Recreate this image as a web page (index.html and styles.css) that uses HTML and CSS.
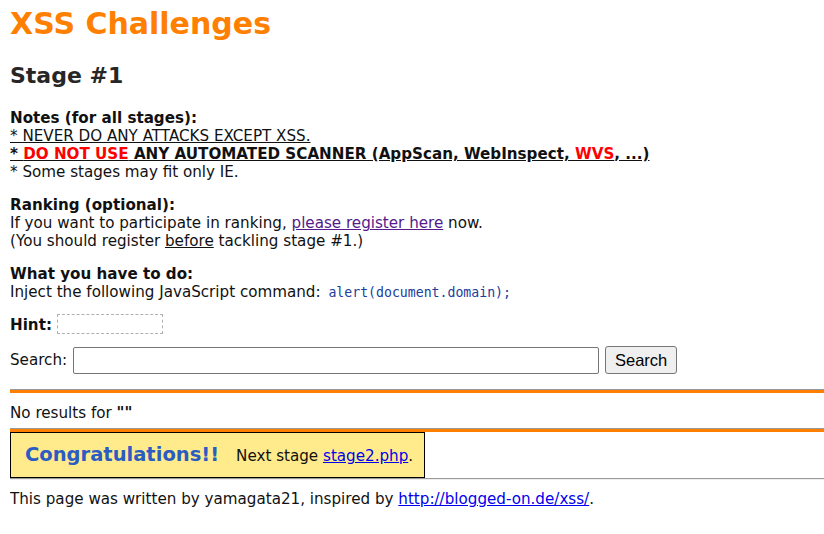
FILE: index.html
```html
<!DOCTYPE html>
<html>
<head>
<meta charset="utf-8">
<title>XSS Challenges (by yamagata21) - Stage #1</title>
<link rel="stylesheet" href="styles.css">
</head>
<body>
<h1 class="title">XSS Challenges</h1>
<h2 class="stage">Stage #1</h2>

<div class="section notes">
<b>Notes (for all stages):</b><br>
<u>* NEVER DO ANY ATTACKS EXCEPT XSS.</u><br>
<b><u>* <span class="red">DO NOT USE</span> ANY AUTOMATED SCANNER (AppScan, WebInspect, <span class="red">WVS</span>, ...)</u></b><br>
* Some stages may fit only IE.
</div>

<div class="section">
<b>Ranking (optional):</b><br>
If you want to participate in ranking, <a class="visited" href="#">please register here</a> now.<br>
(You should register <u>before</u> tackling stage #1.)
</div>

<div class="section">
<b>What you have to do:</b><br>
Inject the following JavaScript command: <code class="cmd">alert(document.domain);</code>
</div>

<div class="section hint-row">
<b>Hint:</b> <span class="hint"></span>
</div>

<form class="search-row" onsubmit="return false;">
<label class="search-label">Search:</label>
<input class="search-input" type="text">
<button class="search-btn" type="submit">Search</button>
</form>

<hr class="orange">
<p class="result">No results for <b>""</b></p>
<hr class="orange">

<div class="congrats"><span class="congrats-title">Congratulations!!</span><span class="next">Next stage <a class="link" href="#">stage2.php</a>.</span></div>

<hr class="plain">
<p class="footer">This page was written by yamagata21, inspired by <a class="link" href="#">http://blogged-on.de/xss/</a>.</p>
</body>
</html>
```

FILE: styles.css
```css
html, body {
  background: #ffffff;
}
body {
  margin: 0 0 0 10px;
  padding: 0;
  font-family: "DejaVu Sans", Verdana, sans-serif;
  font-size: 15.15px;
  line-height: 18px;
  color: #111;
}
.title {
  margin: 6px 0 0;
  font-size: 30px;
  line-height: 36px;
  font-weight: bold;
  color: #ff8000;
}
.stage {
  margin: 21px 0 0;
  font-size: 22px;
  line-height: 26px;
  font-weight: bold;
  color: #262626;
}
.section {
  margin-top: 15px;
}
.notes {
  margin-top: 20px;
}
.red {
  color: #ff0000;
}
a.visited {
  color: #551a8b;
}
a.link {
  color: #0000ee;
}
.cmd {
  margin-left: 3px;
  font-family: "DejaVu Sans Mono", monospace;
  font-size: 13.2px;
  color: #20409a;
}
.hint-row {
  margin-top: 12px;
}
.hint {
  display: inline-block;
  width: 104px;
  height: 18px;
  border: 1px dashed #b0b0b0;
  vertical-align: -4px;
}
.search-row {
  display: flex;
  align-items: center;
  margin: 12px 0 0;
  height: 28px;
}
.search-label {
  margin-right: 6px;
}
.search-input {
  box-sizing: border-box;
  width: 526px;
  height: 27px;
  margin: 0;
  border: 1px solid #767676;
  border-radius: 2px;
  padding: 1px 3px;
  font-family: "DejaVu Sans", sans-serif;
  font-size: 15px;
}
.search-btn {
  box-sizing: border-box;
  margin: 0 0 0 6px;
  width: 72px;
  height: 28px;
  padding: 0;
  border: 1px solid #767676;
  border-radius: 3px;
  background: #efefef;
  font-family: "Liberation Sans", Arial, sans-serif;
  font-size: 16.5px;
  color: #000;
}
hr.orange {
  margin: 15px 0 0;
  height: 3px;
  border: 0;
  border-top: 1px solid #999;
  background: #ff8000;
}
.result {
  margin: 11px 0 6px;
}
.result + hr.orange {
  margin-top: 0;
}
.congrats {
  display: inline-block;
  margin: 0;
  padding: 0 11px 0 14px;
  height: 44px;
  line-height: 44px;
  border: 1px solid #000;
  background: #ffeb8b;
  vertical-align: top;
}
.congrats-title {
  font-size: 19.5px;
  font-weight: bold;
  color: #2a5cc4;
}
.next {
  margin-left: 17px;
  color: #111;
}
hr.plain {
  margin: 0;
  border: 0;
  border-top: 1px solid #9a9a9a;
  border-bottom: 1px solid #eeeeee;
  height: 0;
}
.footer {
  margin: 10px 0 0;
}
```
